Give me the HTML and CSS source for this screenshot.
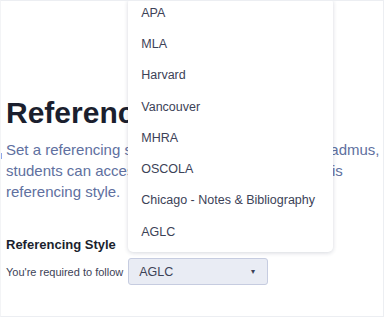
FILE: index.html
```html
<!DOCTYPE html>
<html>
  <head>
    <title>Referencing</title>
    <link rel="stylesheet" href="styles.css">
  </head>
  <body>
    <div class="frame">
      <span class="focus-mark"></span>
      <h1>Referencing</h1>
      <p class="lead">
        Set a referencing style for your assessment. In Cadmus,
        students can access key support resources for this
        referencing style.
      </p>

      <h2>Referencing Style</h2>
      <div class="field">
        <span class="field-label">You're required to follow</span>
        <div class="select-wrap">
          <div class="select">
            <span>AGLC</span>
            <span class="caret">&#9662;</span>
          </div>
          <ul class="menu">
            <li>APA</li>
            <li>MLA</li>
            <li>Harvard</li>
            <li>Vancouver</li>
            <li>MHRA</li>
            <li>OSCOLA</li>
            <li>Chicago - Notes &amp; Bibliography</li>
            <li>AGLC</li>
          </ul>
        </div>
      </div>
    </div>
  </body>
</html>
```

FILE: styles.css
```css
body {
  margin: 0;
  font-family: "Liberation Sans", Arial, sans-serif;
  background: #fff;
  color: #1a1f36;
}
.frame {
  position: relative;
  box-sizing: border-box;
  height: 317px;
  border: 1px solid #eceef2;
  border-left-color: #f3f4f6;
  padding: 95px 3px 0 5px;
  overflow: hidden;
}
.focus-mark {
  position: absolute;
  left: -1px;
  top: 152px;
  width: 2px;
  height: 6px;
  background: #8fa6e8;
}
h1 {
  margin: 0;
  font-size: 30px;
  line-height: 34px;
  font-weight: 700;
  color: #1b1f2e;
}
.lead {
  margin: 9px 0 0;
  font-size: 15px;
  line-height: 21px;
  color: #6070a0;
}
h2 {
  margin: 34px 0 0;
  font-size: 13px;
  line-height: 18px;
  font-weight: 700;
  color: #1b1f2e;
}
.field {
  display: flex;
  align-items: center;
  gap: 5px;
  margin-top: 4px;
}
.field-label {
  font-size: 11px;
  color: #3c4257;
}
.select-wrap {
  position: relative;
}
.select {
  box-sizing: border-box;
  width: 140px;
  height: 27px;
  display: flex;
  align-items: center;
  justify-content: space-between;
  padding: 0 12px 0 10px;
  background: #e9ecf4;
  border: 1px solid #c6cce0;
  border-radius: 3px;
  font-size: 12.5px;
  color: #3c4257;
}
.caret {
  font-size: 8px;
  color: #3c4257;
}
.menu {
  position: absolute;
  left: 0;
  bottom: calc(100% + 6px);
  width: 205px;
  margin: 0;
  padding: 0 0 4px;
  list-style: none;
  background: #fff;
  border-radius: 5px;
  box-shadow: 0 1px 4px rgba(30, 40, 70, 0.18);
}
.menu li {
  height: 31.3px;
  line-height: 31.3px;
  padding-left: 13px;
  font-size: 12.5px;
  color: #3c4257;
  white-space: nowrap;
}
```
